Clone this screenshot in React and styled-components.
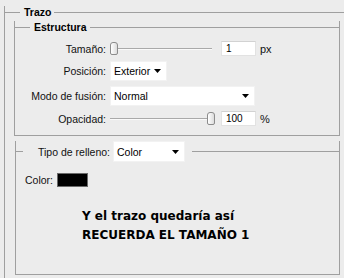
import React from 'react'
import styled, { createGlobalStyle } from 'styled-components'

const Global = createGlobalStyle`
  html, body { margin: 0; padding: 0; background: #ececec; }
`

const LINE = '#9f9f9f'

const Page = styled.div`
  width: 344px;
  height: 278px;
  overflow: hidden;
  box-sizing: border-box;
  padding-top: 12px;
  background: #ececec;
  font-family: "Liberation Sans", Arial, sans-serif;
  font-size: 10.5px;
  color: #111;
`

const Frame = styled.div`
  margin: ${p => p.$margin};
  border-left: 1px solid ${LINE};
  border-right: ${p => (p.$closed ? `1px solid ${LINE}` : 'none')};
  border-bottom: ${p => (p.$closed ? `1px solid ${LINE}` : 'none')};
  padding-bottom: ${p => p.$pb || 0}px;
`

const Head = styled.div`
  display: flex;
  align-items: center;
  height: ${p => p.$h}px;
  margin-top: -${p => Math.floor(p.$h / 2)}px;
  margin-left: -1px;
  margin-right: ${p => (p.$closed ? '-1px' : '0')};
`

const Tick = styled.div`
  width: ${p => p.$w}px;
  height: 1px;
  background: ${LINE};
`

const Rule = styled.div`
  flex: 1;
  height: 1px;
  margin-left: ${p => p.$gap || 0}px;
  background: ${LINE};
`

const Title = styled.span`
  padding: 0 3px 0 4px;
  font-weight: bold;
  font-size: 10.5px;
  line-height: 13px;
  color: #000;
`

const Rows = styled.div`
  display: flex;
  flex-direction: column;
  gap: 5px;
  padding-top: 7px;
`

const Row = styled.div`
  display: flex;
  align-items: center;
  height: ${p => p.$h}px;
`

const Label = styled.span`
  width: ${p => p.$w || 91}px;
  text-align: right;
  margin-right: ${p => p.$gap ?? 4}px;
  white-space: nowrap;
`

const Slider = styled.div`
  position: relative;
  width: 102px;
  height: 13px;
  display: flex;
  align-items: center;
`

const Track = styled.div`
  flex: 1;
  height: 1px;
  background: #a9a9a9;
  border-bottom: 1px solid #fafafa;
`

const Thumb = styled.div`
  position: absolute;
  top: 0;
  left: ${p => p.$left}px;
  width: 6px;
  height: 11px;
  border: 1px solid #8c8c8c;
  border-radius: 3px 3px 2px 2px;
  background: linear-gradient(to right, #ffffff, #dcdcdc);
`

const Field = styled.div`
  margin-left: 9px;
  width: 35px;
  height: 15px;
  box-sizing: border-box;
  padding-left: 4px;
  background: #fff;
  border: 1px solid #e2e2e2;
  border-top-color: #d2d2d2;
  display: flex;
  align-items: center;
  font-size: 10px;
  color: #000;
`

const Unit = styled.span`
  margin-left: 4px;
  font-size: 11px;
`

const Select = styled.div`
  width: ${p => p.$w}px;
  height: ${p => p.$h || 20}px;
  margin-left: ${p => p.$ml || 0}px;
  box-sizing: border-box;
  padding: 0 5px 0 3px;
  background: #fff;
  border: 1px solid #f2f2f2;
  display: flex;
  align-items: center;
  justify-content: space-between;
  color: #000;
  font-size: 10.5px;
`

const Arrow = () => (
  <svg width="7" height="4" viewBox="0 0 7 4">
    <polygon points="0,0 7,0 3.5,4" fill="#000" />
  </svg>
)

const ColorRow = styled.div`
  display: flex;
  align-items: center;
  height: 15px;
  margin-top: 10px;
  padding-left: 9px;
`

const Swatch = styled.div`
  width: 29px;
  height: 12px;
  margin-left: 4px;
  background: #000;
  border: 1px solid #6a6a6a;
`

const Message = styled.div`
  margin-top: 20px;
  padding-left: 66px;
  font-family: "DejaVu Sans", Verdana, sans-serif;
  font-weight: bold;
  font-size: 12px;
  line-height: 19px;
  color: #000;
`

const App = () => {
  return (
    <>
      <Global />
      <Page>
        <Frame $margin="0 0 0 4px" $pb={20}>
          <Head $h={13}>
            <Tick $w={16} />
            <Title>Trazo</Title>
            <Rule />
          </Head>

          <Frame $margin="8px 4px 0 9px" $closed $pb={9}>
            <Head $h={13} $closed>
              <Tick $w={16} />
              <Title>Estructura</Title>
              <Rule />
            </Head>
            <Rows>
              <Row $h={15}>
                <Label>Tamaño:</Label>
                <Slider>
                  <Track />
                  <Thumb $left={0} />
                </Slider>
                <Field>1</Field>
                <Unit>px</Unit>
              </Row>
              <Row $h={20}>
                <Label>Posición:</Label>
                <Select $w={57}>
                  Exterior <Arrow />
                </Select>
              </Row>
              <Row $h={20}>
                <Label>Modo de fusión:</Label>
                <Select $w={145}>
                  Normal <Arrow />
                </Select>
              </Row>
              <Row $h={15}>
                <Label>Opacidad:</Label>
                <Slider>
                  <Track />
                  <Thumb $left={97} />
                </Slider>
                <Field>100</Field>
                <Unit>%</Unit>
              </Row>
            </Rows>
          </Frame>

          <Frame $margin="15px 4px 0 10px" $closed $pb={29}>
            <Head $h={21} $closed>
              <Tick $w={8} />
              <Label $w={87} $gap={3}>Tipo de relleno:</Label>
              <Select $w={72} $h={21}>
                Color <Arrow />
              </Select>
              <Rule $gap={7} />
            </Head>
            <ColorRow>
              <span>Color:</span>
              <Swatch />
            </ColorRow>
            <Message>
              <div>Y el trazo quedaría así</div>
              <div>RECUERDA EL TAMAÑO 1</div>
            </Message>
          </Frame>
        </Frame>
      </Page>
    </>
  )
}

export default App
